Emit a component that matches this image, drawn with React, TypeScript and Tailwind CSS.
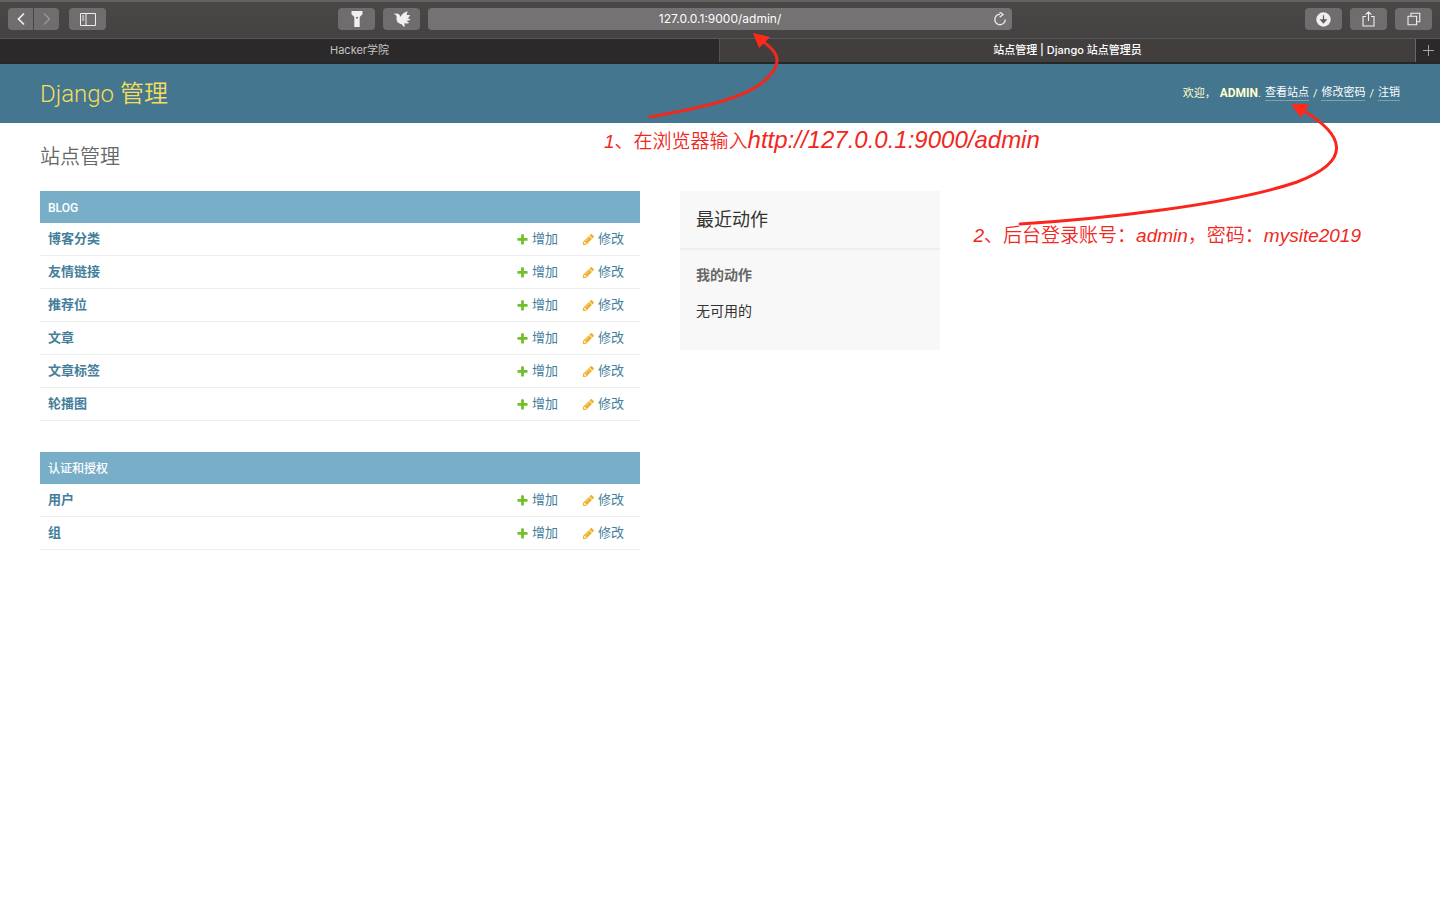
import type { ReactNode } from "react";

const blogModels = ["博客分类", "友情链接", "推荐位", "文章", "文章标签", "轮播图"];
const authModels = ["用户", "组"];

function ToolButton({ label, className = "w-[37px] rounded", children }: { label: string; className?: string; children: ReactNode }) {
  return (
    <button
      type="button"
      aria-label={label}
      className={`flex h-[22px] items-center justify-center bg-[#6f6d6d] text-[#f0f0f0] ${className}`}
    >
      {children}
    </button>
  );
}

function BrowserToolbar() {
  return (
    <div className="flex h-[38px] items-center border-t-2 border-[#636060] bg-linear-to-b from-[#4b4747] to-[#444242] px-2 pb-0.5">
      <div className="flex flex-1 items-center justify-between pr-2">
        <div className="flex items-center">
          <ToolButton label="后退" className="w-[25px] rounded-l">
            <svg width="10" height="14" viewBox="0 0 10 14" fill="none" stroke="currentColor" strokeWidth="1.7">
              <path d="M8 1.5 2.5 7 8 12.5" />
            </svg>
          </ToolButton>
          <ToolButton label="前进" className="ml-px w-[25px] rounded-r">
            <svg width="10" height="14" viewBox="0 0 10 14" fill="none" stroke="#969494" strokeWidth="1.5">
              <path d="M2 1.5 7.5 7 2 12.5" />
            </svg>
          </ToolButton>
          <ToolButton label="边栏" className="ml-2.5 w-[37px] rounded">
            <svg width="16" height="13" viewBox="0 0 16 13" fill="none" stroke="currentColor" strokeWidth="1">
              <path d="M.5.5h15v12H.5zM6 .5v12M2 3h2.2M2 5h2.2M2 7h2.2" />
            </svg>
          </ToolButton>
        </div>
        <div className="flex items-center gap-2">
          <ToolButton label="手电筒">
            <svg width="12" height="16" viewBox="0 0 12 16" fill="currentColor">
              <path d="M.5 0h11v3.2L8.7 6v10H3.3V6L.5 3.2z" />
              <circle cx="6" cy="6.8" r="1" fill="#6f6d6d" />
            </svg>
          </ToolButton>
          <ToolButton label="飞鸟">
            <svg width="18" height="16" viewBox="0 0 18 16" fill="currentColor">
              <path d="M.5 2.6 3 2.7C5.2 2.1 6.8 3.6 7.6 6 8.6 3.4 11 1.4 14.6.3L13.6 4 17 3.9C16.6 5.5 15.8 6.5 14.4 7.2L17.6 8.2C16.4 9.2 15 9.7 13.4 9.8L16.2 11.9C14.6 12.4 13 12.6 11.4 12.3L11.8 16C10.4 15.4 9.4 14.5 8.8 13.2 5.6 12.8 3.5 10.8 3.6 8 3.6 6.4 3.8 5.4 3 4.2z" />
            </svg>
          </ToolButton>
        </div>
      </div>
      <div className="relative flex h-[22px] w-[41%] items-center rounded bg-[#747272] text-white">
        <input
          aria-label="地址"
          defaultValue="127.0.0.1:9000/admin/"
          className="w-full bg-transparent text-center font-['Inter','Noto_Sans_CJK_SC',sans-serif] text-xs outline-none"
        />
        <button type="button" aria-label="重新载入" className="absolute right-[5px]">
          <svg width="14" height="14" viewBox="0 0 14 14" fill="none" stroke="#e4e4e4" strokeWidth="1.4">
            <path d="M7 2.3A5.2 5.2 0 1 0 12.2 7.4" />
            <path d="M6.6 0 10 2.6 6.6 5.2" />
          </svg>
        </button>
      </div>
      <div className="flex flex-1 items-center justify-end gap-2 pl-2">
        <ToolButton label="下载">
          <svg width="15" height="15" viewBox="0 0 15 15">
            <circle cx="7.5" cy="7.5" r="7.2" fill="currentColor" />
            <path d="M7.5 3.3v6M4.9 7.9l2.6 2.9 2.6-2.9z" fill="#5f5d5d" stroke="#5f5d5d" strokeWidth="1.2" />
          </svg>
        </ToolButton>
        <ToolButton label="共享">
          <svg width="13" height="16" viewBox="0 0 13 16" fill="none" stroke="currentColor" strokeWidth="1.1">
            <path d="M4 5.5H1v9.5h11V5.5H9M6.5 10V1M3.6 3.7 6.5.9l2.9 2.8" />
          </svg>
        </ToolButton>
        <ToolButton label="标签页概览">
          <svg width="14" height="14" viewBox="0 0 14 14" fill="none" stroke="currentColor" strokeWidth="1.1">
            <path d="M1 4.2h8.6v8.6H1zM4 4V1.2h8.8v8.6H9.8" />
          </svg>
        </ToolButton>
      </div>
    </div>
  );
}

function TabBar() {
  return (
    <div className="flex h-[26px] border-t border-b-2 border-t-[#5a5757] border-b-[#25282a] bg-[#2b2929] font-['Inter','Noto_Sans_CJK_SC',sans-serif] text-[11px]">
      <button type="button" className="w-1/2 border-r border-[#555252] pb-px text-[#c4c2c2]">
        Hacker学院
      </button>
      <button type="button" className="flex-1 border-r border-[#6a6767] bg-[#423e3e] pb-px font-medium text-white">
        站点管理 | Django 站点管理员
      </button>
      <button type="button" aria-label="新标签页" className="flex w-6 items-center justify-center">
        <svg width="11" height="11" viewBox="0 0 11 11" stroke="#a5a3a3" strokeWidth="1">
          <path d="M5.5 0v11M0 5.5h11" />
        </svg>
      </button>
    </div>
  );
}

function HeaderLink({ children }: { children: ReactNode }) {
  return (
    <a href="#" className="border-b border-[#7ba1b3] text-white">
      {children}
    </a>
  );
}

function SiteHeader() {
  return (
    <header className="flex h-[59px] items-center justify-between bg-[#44768f] px-10">
      <h1 className="text-2xl font-[350] text-[#f5dd5d]">Django 管理</h1>
      <div className="flex items-center gap-1 text-[11px] leading-[14px] text-[#ffffcc]">
        <span>欢迎，</span>
        <span>
          <strong className="text-xs leading-[14px] font-bold">ADMIN</strong>.
        </span>
        <HeaderLink>查看站点</HeaderLink>
        <span>/</span>
        <HeaderLink>修改密码</HeaderLink>
        <span>/</span>
        <HeaderLink>注销</HeaderLink>
      </div>
    </header>
  );
}

function AddIcon() {
  return (
    <svg width="13" height="13" viewBox="0 0 1792 1792" fill="#70bf2b">
      <path d="M1600 796v192q0 40-28 68t-68 28h-416v416q0 40-28 68t-68 28h-192q-40 0-68-28t-28-68v-416h-416q-40 0-68-28t-28-68v-192q0-40 28-68t68-28h416v-416q0-40 28-68t68-28h192q40 0 68 28t28 68v416h416q40 0 68 28t28 68z" />
    </svg>
  );
}

function ChangeIcon() {
  return (
    <svg width="13" height="13" viewBox="0 0 1792 1792" fill="#efb12b">
      <path d="M491 1536l91-91-235-235-91 91v107h128v128h107zm523-928q0-22-22-22-10 0-17 7l-542 542q-7 7-7 17 0 22 22 22 10 0 17-7l542-542q7-7 7-17zm-54-192l416 416-832 832h-416v-416zm683 96q0 53-37 90l-166 166-416-416 166-165q36-38 90-38 53 0 91 38l235 234q37 39 37 91z" />
    </svg>
  );
}

function ModelTable({ caption, models }: { caption: string; models: string[] }) {
  return (
    <table className="w-full border-separate border-spacing-0 text-[13px] leading-4 text-[#447e9b]">
      <caption className="bg-[#79aec8] px-2 pt-[9px] pb-[7px] text-left text-xs leading-4 font-medium text-white">{caption}</caption>
      <tbody>
        {models.map((model) => (
          <tr key={model} className="h-[33px]">
            <th scope="row" className="border-b border-[#eeeeee] px-2 text-left font-bold">
              <a href="#">{model}</a>
            </th>
            <td className="w-[66px] border-b border-[#eeeeee]">
              <a href="#" className="flex items-center gap-[3px]">
                <AddIcon />
                增加
              </a>
            </td>
            <td className="w-[58px] border-b border-[#eeeeee]">
              <a href="#" className="flex items-center gap-[3px]">
                <ChangeIcon />
                修改
              </a>
            </td>
          </tr>
        ))}
      </tbody>
    </table>
  );
}

function RecentActions() {
  return (
    <aside className="w-[260px] shrink-0 bg-[#f8f8f8]">
      <h2 className="border-b-2 border-[#eeeeee] px-4 py-4 text-lg leading-[25px] text-[#333333]">最近动作</h2>
      <div className="px-4 pt-[15px] pb-[29px]">
        <h3 className="text-sm leading-5 font-bold text-[#666666]">我的动作</h3>
        <p className="mt-4 text-sm leading-5 text-[#333333]">无可用的</p>
      </div>
    </aside>
  );
}

/* Red notes and arrows that lie over the page. */
function Notes() {
  return (
    <div className="pointer-events-none absolute inset-0 font-['Liberation_Sans','Noto_Sans_CJK_SC',sans-serif] text-[19px] leading-7 font-[350] whitespace-nowrap text-[#f0281e] italic [font-synthesis:none]">
      <div className="absolute top-[30px] left-1/2 -ml-[116px]">
        <svg width="140" height="92" viewBox="604 30 140 92" className="overflow-visible">
          <path d="M650 117C700 108 742 99 763 82 783 65 780 54 765 43" fill="none" stroke="#f0281e" strokeWidth="3" strokeLinecap="round" />
          <path d="M753 33 770 37 759 48z" fill="#ff2a1a" />
        </svg>
        <p className="mt-1">
          1、在浏览器输入<span className="text-2xl leading-7">http://127.0.0.1:9000/admin</span>
        </p>
      </div>
      <div className="absolute top-[100px] right-[79px]">
        <svg width="384" height="120" viewBox="977 100 384 120" className="ml-auto overflow-visible">
          <path d="M1020 224C1100 219 1230 205 1297 182 1355 160 1342 134 1304 111" fill="none" stroke="#fb251b" strokeWidth="3" strokeLinecap="round" />
          <path d="M1291 104 1309 104 1301 118z" fill="#ff2a1a" />
        </svg>
        <p className="mt-0.5">2、后台登录账号：admin，密码：mysite2019</p>
      </div>
    </div>
  );
}

export default function App() {
  return (
    <div lang="zh-CN" className="relative min-h-screen overflow-x-hidden bg-white font-['Roboto','Noto_Sans_CJK_SC',sans-serif]">
      <BrowserToolbar />
      <TabBar />
      <SiteHeader />
      <main className="px-10 pt-5">
        <h1 className="mb-5 text-xl leading-7 font-[350] text-[#666666]">站点管理</h1>
        <div className="flex items-start gap-10">
          <div className="flex max-w-[600px] flex-1 flex-col gap-[31px]">
            <ModelTable caption="BLOG" models={blogModels} />
            <ModelTable caption="认证和授权" models={authModels} />
          </div>
          <RecentActions />
        </div>
      </main>
      <Notes />
    </div>
  );
}
